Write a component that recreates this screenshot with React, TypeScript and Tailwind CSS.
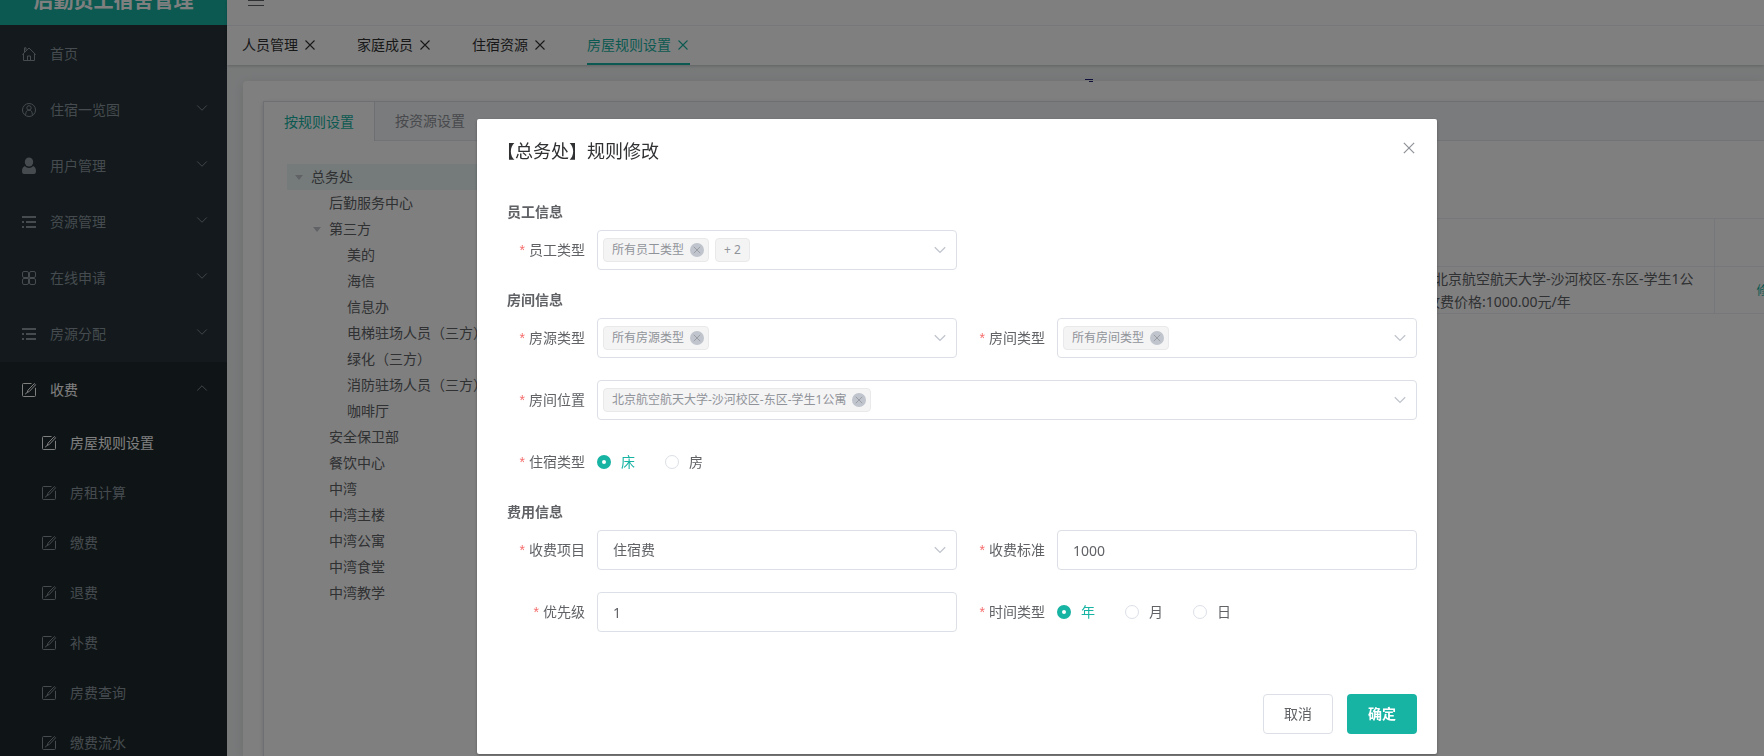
import React, { useState } from 'react';
import { ChevronDown, ChevronUp } from 'lucide-react';

type IconName = 'home' | 'user' | 'admin' | 'list' | 'grid' | 'edit';

const MENU: { icon: IconName; label: string; arrow?: boolean }[] = [
  { icon: 'home', label: '首页' },
  { icon: 'user', label: '住宿一览图', arrow: true },
  { icon: 'admin', label: '用户管理', arrow: true },
  { icon: 'list', label: '资源管理', arrow: true },
  { icon: 'grid', label: '在线申请', arrow: true },
  { icon: 'list', label: '房源分配', arrow: true },
];

const SUB_MENU = ['房屋规则设置', '房租计算', '缴费', '退费', '补费', '房费查询', '缴费流水'];

const PAGE_TABS = ['人员管理', '家庭成员', '住宿资源', '房屋规则设置'];

const TREE: { label: string; level: 0 | 1 | 2; open?: boolean }[] = [
  { label: '总务处', level: 0, open: true },
  { label: '后勤服务中心', level: 1 },
  { label: '第三方', level: 1, open: true },
  { label: '美的', level: 2 },
  { label: '海信', level: 2 },
  { label: '信息办', level: 2 },
  { label: '电梯驻场人员（三方）', level: 2 },
  { label: '绿化（三方）', level: 2 },
  { label: '消防驻场人员（三方）', level: 2 },
  { label: '咖啡厅', level: 2 },
  { label: '安全保卫部', level: 1 },
  { label: '餐饮中心', level: 1 },
  { label: '中湾', level: 1 },
  { label: '中湾主楼', level: 1 },
  { label: '中湾公寓', level: 1 },
  { label: '中湾食堂', level: 1 },
  { label: '中湾教学', level: 1 },
];

const LEVEL_PADDING = ['pl-0', 'pl-[18px]', 'pl-[36px]'];

const MenuIcon: React.FC<{ name: IconName }> = ({ name }) => (
  <svg viewBox="0 0 14 14" className="h-3.5 w-3.5 shrink-0 overflow-visible" fill="none" stroke="currentColor">
    {name === 'home' && (
      <>
        <path d="M.3 7.600 7 1l6.700 6.600M1.500 6.600v6.900h11V6.600M2.500 5V.8h1.500v2.500" />
        <path d="M5.500 13.500V9h3v4.500" />
      </>
    )}
    {name === 'user' && (
      <>
        <circle cx="7" cy="7" r="6.500" />
        <circle cx="7" cy="4.900" r="2.200" />
        <path d="M3.700 11.800c0-3.200 1.100-4.700 3.300-4.700s3.300 1.500 3.300 4.700" />
      </>
    )}
    {name === 'admin' && (
      <g fill="currentColor" stroke="none">
        <ellipse cx="7" cy="3" rx="4.200" ry="4.500" />
        <path d="M2.800 7c1.100 1.200 2.500 1.900 4.200 1.900s3.100-.7 4.200-1.900C13.200 8 14 9.700 14 12c0 1.700-.7 3-2 3H2c-1.300 0-2-1.300-2-3 0-2.300.8-4 2.800-5z" />
      </g>
    )}
    {name === 'list' && (
      <g fill="currentColor" stroke="none">
        <path d="M0 1h14v2H0zM0 6h2v2H0zM4 6h10v2H4zM0 11h2v2H0zM4 11h10v2H4z" />
      </g>
    )}
    {name === 'grid' && (
      <>
        <path d="M6.500 6.500H2a1.500 1.500 0 0 1-1.500-1.500V2A1.500 1.500 0 0 1 2 .5h3A1.500 1.500 0 0 1 6.500 2zM7.500 6.500H12A1.500 1.500 0 0 0 13.500 5V2A1.500 1.500 0 0 0 12 .5H9A1.500 1.500 0 0 0 7.500 2z" />
        <path d="M6.500 7.500H2A1.500 1.500 0 0 0 .5 9v3A1.500 1.500 0 0 0 2 13.500h3A1.500 1.500 0 0 0 6.500 12zM7.500 7.500H12A1.500 1.500 0 0 1 13.500 9v3a1.500 1.500 0 0 1-1.500 1.500H9A1.500 1.500 0 0 1 7.500 12z" />
      </>
    )}
    {name === 'edit' && (
      <>
        <path d="M9.500.5h-8a1 1 0 0 0-1 1v11a1 1 0 0 0 1 1h11a1 1 0 0 0 1-1V4.800" />
        <path d="M12.300.6 6 7.200l-.9 2.300 2.200-1 6.300-6.700zM5.100 9.500l-2 1.700" />
      </>
    )}
  </svg>
);

const CloseIcon: React.FC<{ className: string }> = ({ className }) => (
  <svg viewBox="0 0 14 14" className={className} fill="none" stroke="currentColor" strokeWidth="1.100">
    <path d="m2.500 2.500 9 9M11.500 2.500l-9 9" />
  </svg>
);

const Sidebar: React.FC = () => (
  <aside className="w-[227px] shrink-0 bg-[#263238] text-[#8a979e]">
    <div className="h-[25px] overflow-hidden bg-[#17b3a3]">
      <h1 className="-mt-6 flex h-[50px] items-center justify-center text-xl font-bold text-white">后勤员工宿舍管理</h1>
    </div>
    <nav className="pt-px">
      {MENU.map(({ icon, label, arrow }) => (
        <a key={label} href="#" className="flex h-14 items-center pr-4 pl-[22px]">
          <MenuIcon name={icon} />
          <span className="ml-3.5 flex-1">{label}</span>
          {arrow && <ChevronDown className="mb-1 h-[18px] w-[18px]" strokeWidth={1.2} />}
        </a>
      ))}
      <div className="bg-[#1e282c]">
        <a href="#" className="flex h-14 items-center pr-4 pl-[22px] text-white">
          <MenuIcon name="edit" />
          <span className="ml-3.5 flex-1">收费</span>
          <ChevronUp className="mb-1 h-[18px] w-[18px] text-[#8a979e]" strokeWidth={1.2} />
        </a>
        {SUB_MENU.map((label, i) => (
          <a key={label} href="#" className={`flex h-[50px] items-center pl-[42px] ${i === 0 ? 'text-white' : ''}`}>
            <MenuIcon name="edit" />
            <span className="ml-3.5">{label}</span>
          </a>
        ))}
      </div>
    </nav>
  </aside>
);

const TopBar: React.FC = () => (
  <header className="relative z-10 bg-white shadow-[0_1px_3px_0_rgba(0,0,0,0.2)]">
    <div className="flex h-[26px] overflow-hidden border-b border-[#ebeef5]">
      <button aria-label="收起菜单" className="-mt-[25px] flex h-[51px] w-[58px] items-center justify-center border-b border-[#d0d4dc] text-[#606266]">
        <svg viewBox="0 0 16 12" className="h-3 w-4" stroke="currentColor">
          <path d="M0 .5h16M0 6.500h16M0 11.500h16" />
        </svg>
      </button>
    </div>
    <nav className="flex h-[39px] gap-10 px-[15px]">
      {PAGE_TABS.map((tab) => {
        const active = tab === '房屋规则设置';
        return (
          <div key={tab} className={`flex items-center border-b-2 ${active ? 'border-[#17b3a3] text-[#17b3a3]' : 'border-transparent text-[#303133]'}`}>
            <a href="#">{tab}</a>
            <button aria-label={`关闭${tab}`} className="ml-[5px]">
              <CloseIcon className="h-3.5 w-3.5" />
            </button>
          </div>
        );
      })}
    </nav>
  </header>
);

const DepartmentTree: React.FC = () => (
  <ul className="w-[260px] shrink-0">
    {TREE.map(({ label, level, open }) => (
      <li key={label} className={`flex h-[26px] items-center whitespace-nowrap ${LEVEL_PADDING[level]} ${level === 0 ? 'bg-[#ebf7f6]' : ''}`}>
        <span className="flex w-6 justify-center">
          {open && (
            <svg viewBox="0 0 8 5" className="h-[5px] w-2 fill-[#c0c4cc]">
              <path d="M0 0h8L4 5z" />
            </svg>
          )}
        </span>
        {label}
      </li>
    ))}
  </ul>
);

const RuleTable: React.FC = () => (
  <table className="mt-[54px] w-full table-fixed border-collapse">
    <thead>
      <tr className="h-12 border-y border-[#ebeef5]">
        <th />
        <th className="w-72 border-r border-[#ebeef5]" />
        <th className="w-[50px]" />
      </tr>
    </thead>
    <tbody>
      <tr className="h-[47px] border-b border-[#ebeef5]">
        <td />
        <td className="border-r border-[#ebeef5] leading-[23px] whitespace-nowrap">
          <p className="pl-2">北京航空航天大学-沙河校区-东区-学生1公</p>
          <p>收费价格:1000.00元/年</p>
        </td>
        <td className="overflow-hidden pl-[42px] whitespace-nowrap">
          <a href="#" className="text-xs text-[#17b3a3]">修改</a>
        </td>
      </tr>
    </tbody>
  </table>
);

const Field: React.FC<{ label: string; id: string; wide?: boolean; children: React.ReactNode }> = ({ label, id, wide, children }) => (
  <div className={`mb-[22px] flex ${wide ? 'col-span-2' : ''}`}>
    <label htmlFor={id} className="w-[100px] shrink-0 pr-3 text-right leading-10">
      <span className="mr-1 font-['Liberation_Sans',sans-serif] text-[#f56c6c]">*</span>
      {label}
    </label>
    <div className="relative h-10 min-w-0 flex-1">{children}</div>
  </div>
);

const Select: React.FC<{ id: string; tags?: string[]; more?: string; value?: string }> = ({ id, tags = [], more, value }) => (
  <>
    <select id={id} className="h-10 w-full appearance-none rounded border border-[#dcdfe6] bg-white px-[15px] outline-none">
      <option>{value}</option>
    </select>
    {/* Selected tags sit on top of the empty select */}
    {tags.length > 0 && (
      <div className="absolute top-2 left-1.5 flex gap-1.5 text-xs text-[#909399]">
        {tags.map((tag) => (
          <span key={tag} className="flex h-6 items-center rounded border border-[#e9e9eb] bg-[#f4f4f5] pr-1 pl-2">
            {tag}
            <button type="button" aria-label={`移除${tag}`} className="ml-1.5 flex h-3.5 w-3.5 items-center justify-center rounded-full bg-[#c0c4cc]">
              <CloseIcon className="h-2.5 w-2.5" />
            </button>
          </span>
        ))}
        {more && <span className="flex h-6 items-center rounded border border-[#e9e9eb] bg-[#f4f4f5] px-2">{more}</span>}
      </div>
    )}
    <svg viewBox="0 0 12 8" className="pointer-events-none absolute top-4 right-[11px] h-2 w-3" fill="none" stroke="#c0c4cc" strokeWidth="1.300">
      <path d="M.8 1.200 6 6.400l5.200-5.200" />
    </svg>
  </>
);

const Input: React.FC<{ id: string; value: string }> = ({ id, value }) => (
  <input id={id} defaultValue={value} className="h-10 w-full rounded border border-[#dcdfe6] bg-white px-[15px] outline-none" />
);

const RadioGroup: React.FC<{ id: string; options: string[] }> = ({ id, options }) => {
  const [selected, setSelected] = useState(options[0]);
  return (
    <div className="flex h-10 items-center gap-[30px]">
      {options.map((option, i) => (
        <label key={option} className={`flex items-center gap-2.5 ${selected === option ? 'text-[#17b3a3]' : ''}`}>
          <input
            type="radio"
            id={i === 0 ? id : undefined}
            name={id}
            checked={selected === option}
            onChange={() => setSelected(option)}
            className="h-3.5 w-3.5 appearance-none rounded-full border border-[#dcdfe6] bg-white checked:border-[5px] checked:border-[#17b3a3]"
          />
          {option}
        </label>
      ))}
    </div>
  );
};

const SectionTitle: React.FC<{ children: React.ReactNode }> = ({ children }) => (
  <h3 className="col-span-2 mb-2.5 pl-2.5 leading-4 font-bold">{children}</h3>
);

const RuleDialog: React.FC = () => (
  <div className="fixed inset-0 z-20 bg-black/50">
    <div role="dialog" aria-label="规则修改" className="mt-[119px] mr-[327px] ml-[477px] rounded-xs bg-white text-[#606266] shadow-[0_1px_3px_rgba(0,0,0,0.3)]">
      <div className="flex justify-between px-5 pt-5 pb-2.5">
        <h2 className="text-lg leading-6 text-[#303133]">【总务处】规则修改</h2>
        <button aria-label="关闭" className="flex h-[18px] items-center text-[#909399]">
          <CloseIcon className="h-4 w-4" />
        </button>
      </div>

      <form className="grid grid-cols-2 px-5 pt-[31px] pb-[30px]">
        <SectionTitle>员工信息</SectionTitle>
        <Field label="员工类型" id="staffType">
          <Select id="staffType" tags={['所有员工类型']} more="+ 2" />
        </Field>

        <SectionTitle>房间信息</SectionTitle>
        <Field label="房源类型" id="sourceType">
          <Select id="sourceType" tags={['所有房源类型']} />
        </Field>
        <Field label="房间类型" id="roomType">
          <Select id="roomType" tags={['所有房间类型']} />
        </Field>
        <Field label="房间位置" id="location" wide>
          <Select id="location" tags={['北京航空航天大学-沙河校区-东区-学生1公寓']} />
        </Field>
        <Field label="住宿类型" id="stayType" wide>
          <RadioGroup id="stayType" options={['床', '房']} />
        </Field>

        <SectionTitle>费用信息</SectionTitle>
        <Field label="收费项目" id="feeItem">
          <Select id="feeItem" value="住宿费" />
        </Field>
        <Field label="收费标准" id="feeStandard">
          <Input id="feeStandard" value="1000" />
        </Field>
        <Field label="优先级" id="priority">
          <Input id="priority" value="1" />
        </Field>
        <Field label="时间类型" id="timeType">
          <RadioGroup id="timeType" options={['年', '月', '日']} />
        </Field>
      </form>

      <div className="flex justify-end gap-3.5 px-5 pt-2.5 pb-5">
        <button className="h-10 w-[70px] rounded border border-[#dcdfe6] bg-white">取消</button>
        <button className="h-10 w-[70px] rounded bg-[#17b3a3] font-bold text-white">确定</button>
      </div>
    </div>

    {/* Floating marker over the mask */}
    <svg viewBox="0 0 8 3" className="absolute top-[79px] left-[1085px] h-[3px] w-2 fill-[#10103a]">
      <path d="M0 0h8v1H0zM4 2h4v1H4z" />
    </svg>
  </div>
);

export default function App() {
  return (
    <div className="flex h-screen overflow-hidden bg-[#f1f4f5] font-['Noto_Sans','Noto_Sans_CJK_SC',sans-serif] text-sm text-[#606266]">
      <Sidebar />
      <div className="flex min-w-0 flex-1 flex-col">
        <TopBar />
        <main className="flex flex-1 flex-col pt-4 pl-4">
          <div className="flex-1 rounded-tl bg-white pt-5 pl-5 shadow-[0_2px_12px_0_rgba(0,0,0,0.1)]">
            <div className="h-full border-t border-l border-[#dcdfe6] shadow-[0_2px_4px_0_rgba(0,0,0,0.12),0_0_6px_0_rgba(0,0,0,0.04)]">
              <div className="flex h-[39px] border-b border-[#e4e7ed] bg-[#f5f7fa]">
                <button className="h-[39px] border-r border-[#dcdfe6] bg-white px-5 text-[#17b3a3]">按规则设置</button>
                <button className="px-5 text-[#909399]">按资源设置</button>
              </div>
              <div className="flex pt-[23px] pl-[23px]">
                <DepartmentTree />
                <div className="min-w-0 flex-1">
                  <RuleTable />
                </div>
              </div>
            </div>
          </div>
        </main>
      </div>
      <RuleDialog />
    </div>
  );
}
